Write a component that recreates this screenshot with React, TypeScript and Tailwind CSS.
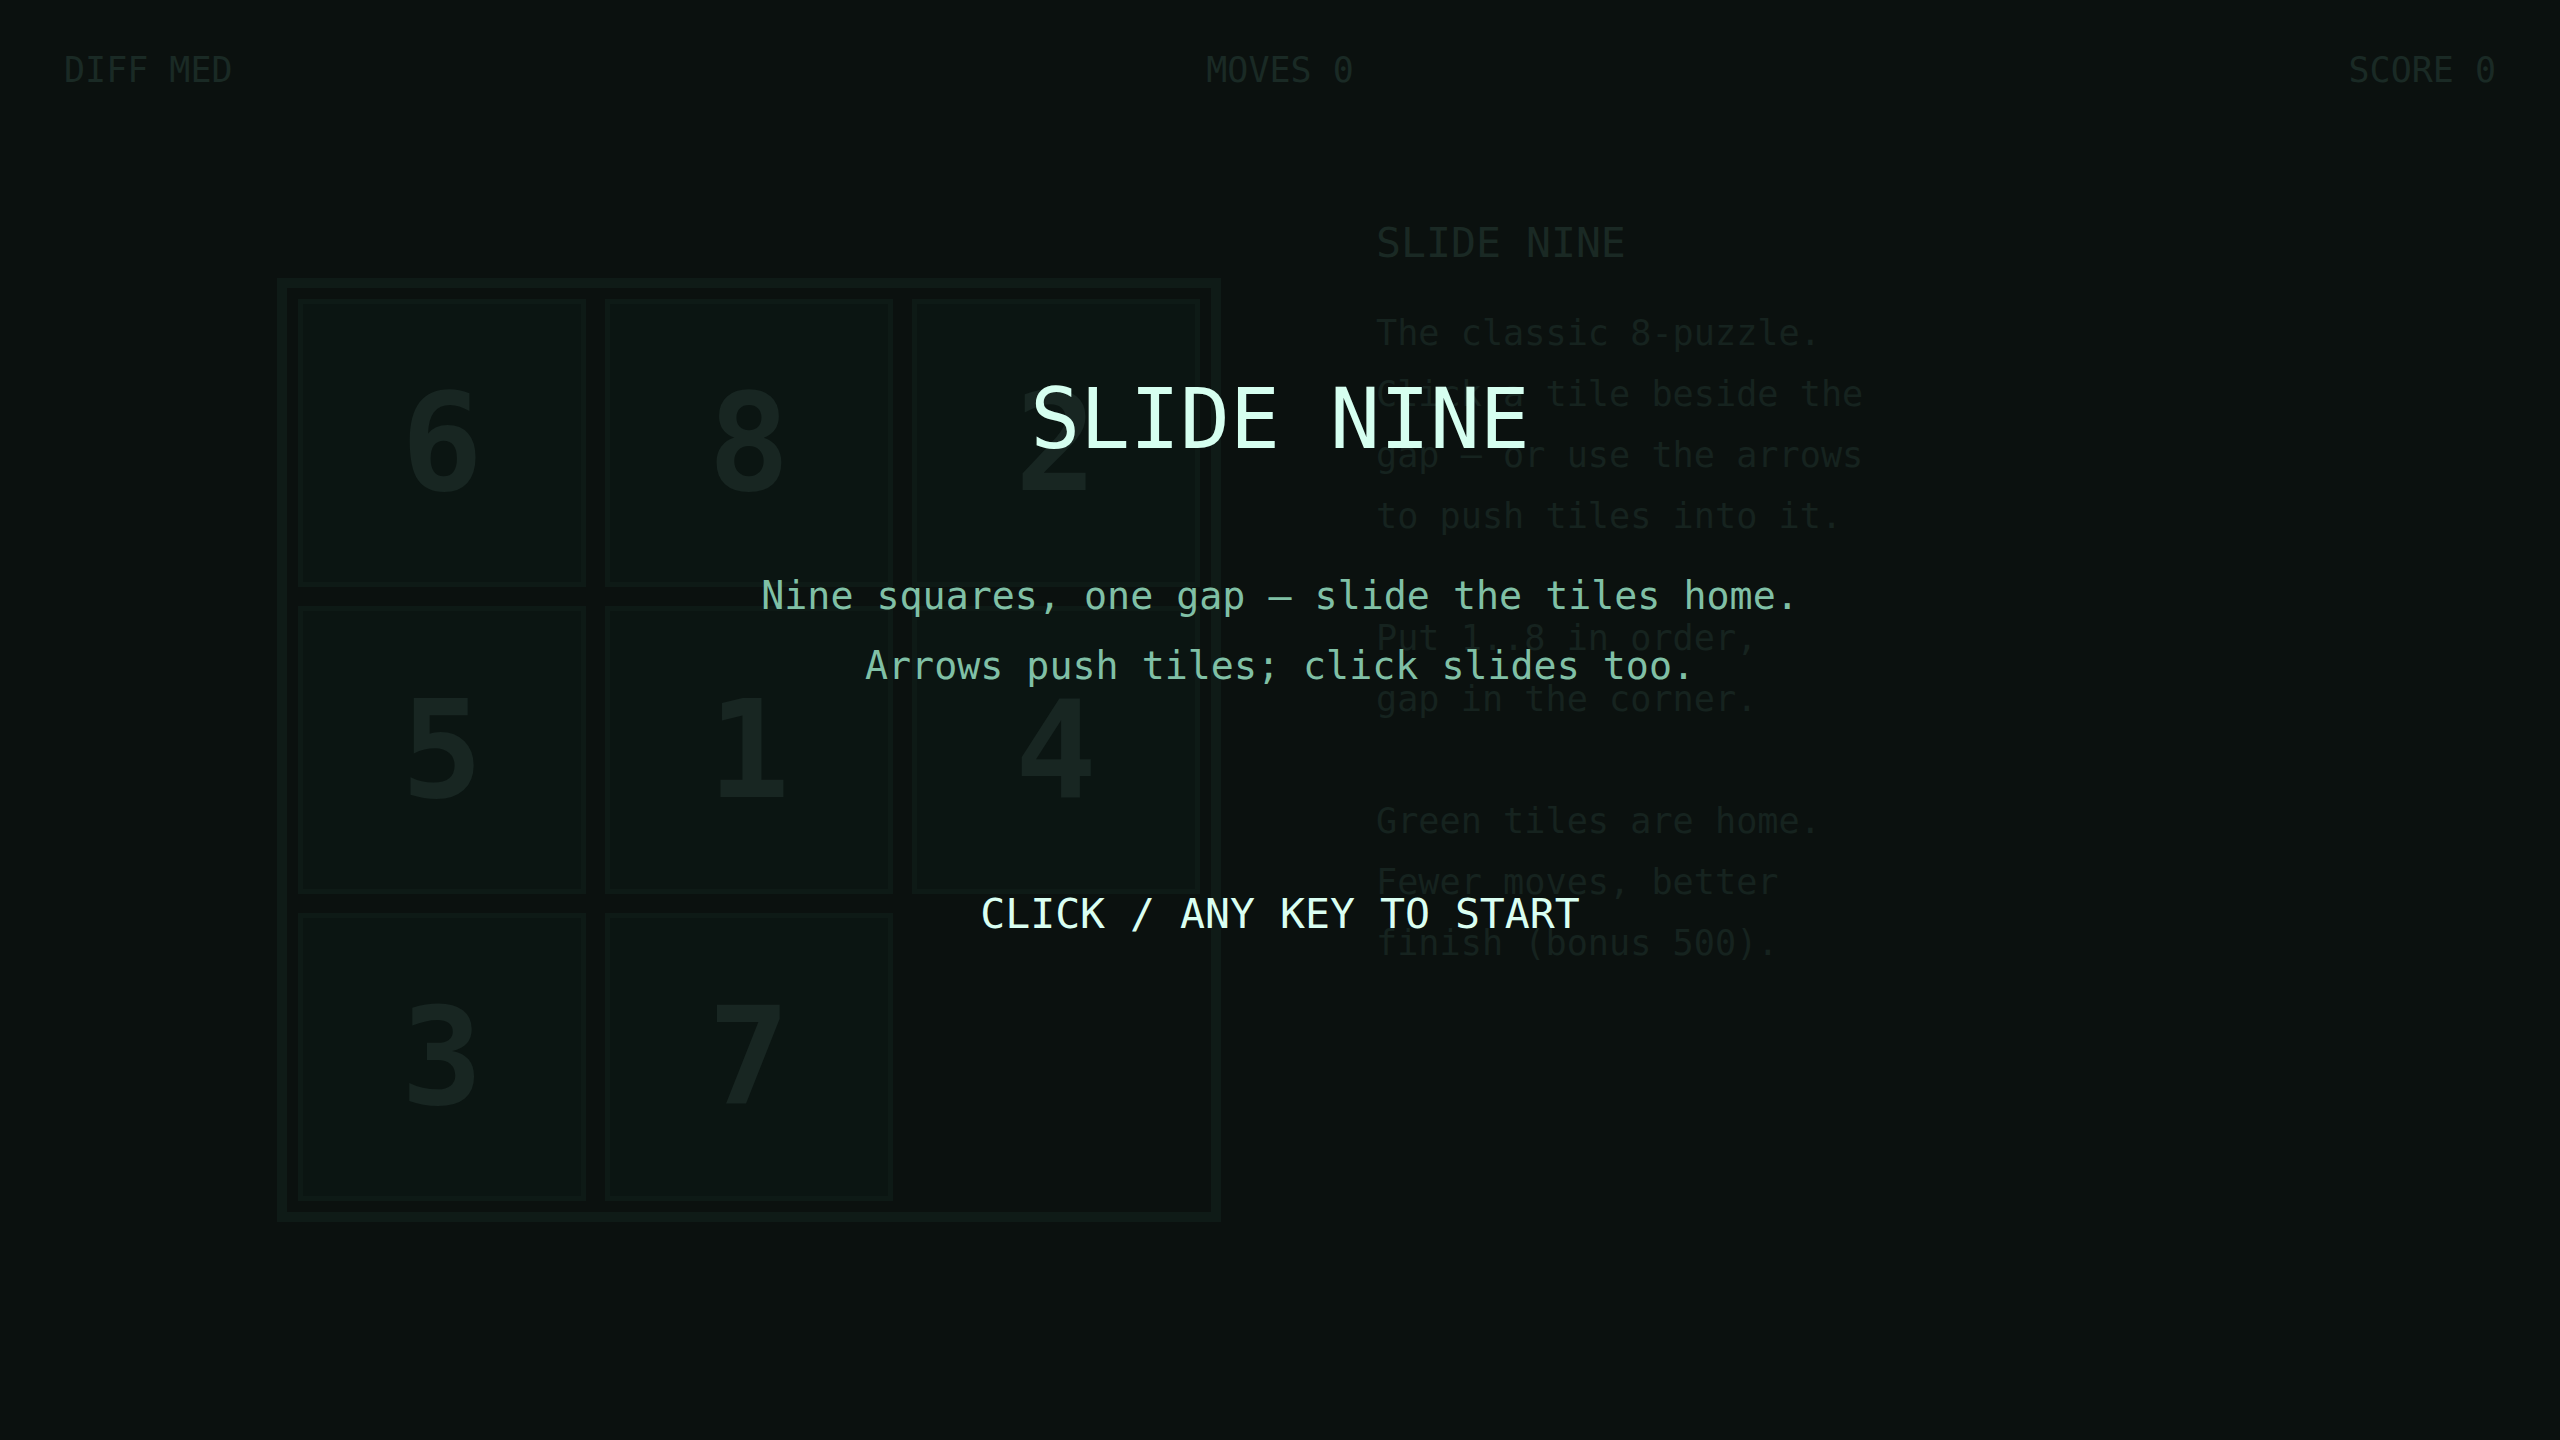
const tiles: (number | null)[] = [6, 8, 2, 5, 1, 4, 3, 7, null]

const rules = [
  'The classic 8-puzzle.',
  'Click a tile beside the',
  'gap — or use the arrows',
  'to push tiles into it.',
  '',
  'Put 1..8 in order,',
  'gap in the corner.',
  '',
  'Green tiles are home.',
  'Fewer moves, better',
  'finish (bonus 500).',
]

function Board() {
  return (
    <div className="mt-[56px] w-[944px] h-[944px] shrink-0 border-[10px] border-[#0f1b17] p-[11px]">
      <div className="grid grid-cols-3 gap-[19px]">
        {tiles.map((n, i) =>
          n === null ? (
            <div key={i} className="h-[288px]" />
          ) : (
            <div
              key={i}
              className="h-[288px] flex items-center justify-center bg-[#0b1512] border-[5px] border-[#0e1a16] text-[136px] leading-none font-bold text-[#182622]"
            >
              {n}
            </div>
          )
        )}
      </div>
    </div>
  )
}

function RulesPanel() {
  return (
    <div className="ml-[155px]">
      <h2 className="text-[41.5px] leading-none text-[#1a2924]">SLIDE NINE</h2>
      <div className="mt-[38px] text-[35.2px] leading-[61px] text-[#16231f]">
        {rules.map((line, i) => (
          <p key={i} className="h-[61px] whitespace-pre">
            {line}
          </p>
        ))}
      </div>
    </div>
  )
}

export default function App() {
  return (
    <div className="relative w-full h-[1440px] overflow-hidden bg-[#0b110f] font-['DejaVu_Sans_Mono',monospace]">
      {/* HUD */}
      <div className="grid grid-cols-3 px-[64px] pt-[53px] text-[35px] leading-none text-[#1a2a25]">
        <span>DIFF MED</span>
        <span className="text-center">MOVES 0</span>
        <span className="text-right">SCORE 0</span>
      </div>

      {/* game area, dimmed under the start screen */}
      <div className="mt-[134px] flex items-start pl-[277px]">
        <Board />
        <RulesPanel />
      </div>

      {/* start overlay */}
      <div className="absolute inset-0 flex flex-col items-center pt-[378px] text-center">
        <h1 className="text-[83px] leading-none text-[#d6fff0]">SLIDE NINE</h1>
        <div className="mt-[100px] text-[38.3px] leading-[70px] text-[#80c0a6]">
          <p>Nine squares, one gap — slide the tiles home.</p>
          <p>Arrows push tiles; click slides too.</p>
        </div>
        <p className="mt-[192px] text-[41.5px] leading-none text-[#dafff2]">CLICK / ANY KEY TO START</p>
      </div>
    </div>
  )
}
